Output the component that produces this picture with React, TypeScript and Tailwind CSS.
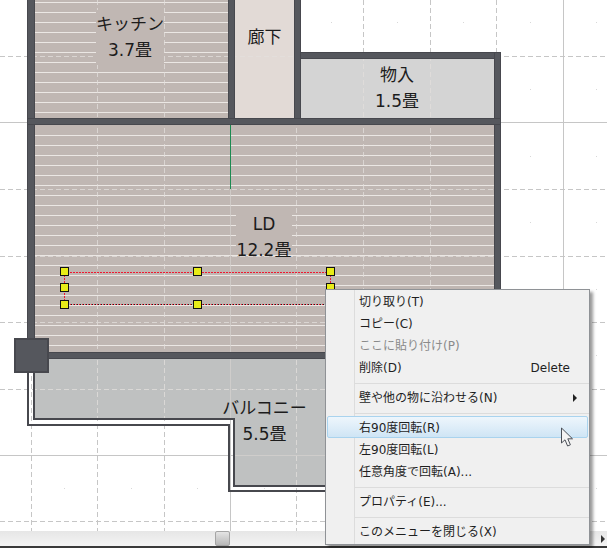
import React from "react";

const jp = "font-['DejaVu_Sans','Noto_Sans_CJK_JP',sans-serif]";

// grid positions of the drawing canvas
const solidX = [230, 563];
const solidY = [122, 455];
const dashX = [31, 97, 164, 296, 363, 430, 496];
const dashY = [56, 189, 256, 322, 389, 521];
const dotX = [64, 131, 197, 264, 331, 397, 463, 530, 596];
const dotY = [22, 89, 156, 222, 289, 355, 488];

const stripes = (from: number, to: number) => {
  const rows: number[] = [];
  for (let y = from; y <= to; y += 10) rows.push(y);
  return rows;
};

const handles = [
  [64, 271],
  [197, 271],
  [330, 271],
  [64, 287],
  [330, 287],
  [64, 304],
  [197, 304],
  [330, 304],
];

const Grid = ({ light }: { light?: boolean }) => {
  const dashed = light ? "#e3dfdd" : "#c6c6c6";
  const solid = light ? "#d5d0ce" : "#c6c6c6";
  return (
    <g shapeRendering="crispEdges">
      {dashX.map((x) => (
        <line key={x} x1={x + 0.5} x2={x + 0.5} y1={0} y2={531} stroke={dashed} strokeDasharray="5 3" />
      ))}
      {dashY.map((y) => (
        <line key={y} y1={y + 0.5} y2={y + 0.5} x1={0} x2={607} stroke={dashed} strokeDasharray="5 3" />
      ))}
      {solidX.map((x) => (
        <line key={x} x1={x + 0.5} x2={x + 0.5} y1={0} y2={531} stroke={solid} />
      ))}
      {solidY.map((y) => (
        <line key={y} y1={y + 0.5} y2={y + 0.5} x1={0} x2={607} stroke={solid} />
      ))}
    </g>
  );
};

const FloorPlan = () => (
  <svg className="absolute inset-0" width={607} height={531} viewBox="0 0 607 531">
    <Grid />
    {dotX.map((x) =>
      dotY.map((y) => <rect key={`${x}-${y}`} x={x} y={y} width={1} height={1} fill="#d8d8d8" />)
    )}

    {/* rooms */}
    <rect x={35} y={0} width={193} height={118} fill="#c0b7b3" />
    <rect x={235} y={0} width={59} height={118} fill="#e2dad6" />
    <rect x={301} y={59} width={193} height={59} fill="#d4d4d4" />
    <rect x={35} y={125} width={459} height={227} fill="#c0b7b3" />
    <path d="M35 359H494V485H235V418H35Z" fill="#bfc1c1" />

    {/* flooring boards */}
    <g shapeRendering="crispEdges" stroke="#ebe7e4">
      {stripes(2, 112).map((y) => (
        <line key={y} x1={35} x2={228} y1={y + 0.5} y2={y + 0.5} />
      ))}
      {stripes(135, 345).map((y) => (
        <line key={y} x1={35} x2={494} y1={y + 0.5} y2={y + 0.5} />
      ))}
    </g>

    {/* grid shows faintly through the rooms */}
    <clipPath id="rooms">
      <rect x={35} y={0} width={193} height={118} />
      <rect x={235} y={0} width={59} height={118} />
      <rect x={301} y={59} width={193} height={59} />
      <rect x={35} y={125} width={459} height={227} />
      <path d="M35 359H494V485H235V418H35Z" />
    </clipPath>
    <g clipPath="url(#rooms)" opacity={0.75}>
      <Grid light />
    </g>

    {/* walls */}
    <g fill="#55575d" stroke="#47484e" shapeRendering="crispEdges">
      <rect x={27.5} y={-2} width={7} height={345} />
      <rect x={228.5} y={-2} width={6} height={120} />
      <rect x={294.5} y={-2} width={6} height={120} />
      <rect x={300.5} y={52.5} width={200} height={6} />
      <rect x={494.5} y={52.5} width={6} height={290} />
      <rect x={27.5} y={118.5} width={473} height={6} />
      <rect x={35.5} y={352.5} width={320} height={6} />
    </g>

    {/* balcony double line */}
    <g fill="none" stroke="#47484e" shapeRendering="crispEdges">
      <path d="M34 355V419H234V486H340" strokeWidth={2} />
      <path d="M28 360V424.5H229V491H340" strokeWidth={2} />
    </g>

    {/* corner column */}
    <rect x={15} y={339} width={33} height={33} fill="#55575d" stroke="#47484e" strokeWidth={2} shapeRendering="crispEdges" />

    {/* guide */}
    <line x1={230.5} x2={230.5} y1={125} y2={189} stroke="#1a8a50" shapeRendering="crispEdges" />

    {/* selected item */}
    <g shapeRendering="crispEdges" fill="none">
      <path d="M64 272.5H331M64.5 272V304M330.5 272V288" stroke="#f01830" strokeDasharray="2 1" />
      <path d="M64 304.5H331" stroke="#f01830" strokeDasharray="1 2" />
      <path d="M65 304.5H331" stroke="#1d1d1d" strokeDasharray="1 2" />
    </g>
    {handles.map(([x, y]) => (
      <rect key={`${x}-${y}`} x={x - 3.5} y={y - 3.5} width={8} height={8} fill="#e8ec18" stroke="#111" shapeRendering="crispEdges" />
    ))}
  </svg>
);

const RoomLabel = ({ className, name, size }: { className: string; name: string; size?: string }) => (
  <div className={`absolute flex flex-col items-center pt-px text-[17px] leading-[26px] text-[#1c1c1c] ${className}`}>
    <span className="whitespace-nowrap">{name}</span>
    {size && <span className="whitespace-nowrap">{size}</span>}
  </div>
);

const MenuItem = ({
  label,
  shortcut,
  disabled,
  active,
  submenu,
}: {
  label: string;
  shortcut?: string;
  disabled?: boolean;
  active?: boolean;
  submenu?: boolean;
}) => (
  <div
    className={`mx-px flex h-[22px] items-center rounded-[2px] pl-[31px] pr-[10px] pt-[2px] ${
      active ? "border border-[#a9d3ee] bg-gradient-to-b from-[#eef6fc] to-[#cfe5f5]" : "border border-transparent"
    } ${disabled ? "text-[#8a8a8a]" : "text-[#1f1f1f]"}`}
  >
    <span className="flex-1 whitespace-nowrap">{label}</span>
    {shortcut && <span className="mr-[7px]">{shortcut}</span>}
    {submenu && <span className="h-0 w-0 border-y-[4px] border-l-[4px] border-y-transparent border-l-[#222]" />}
  </div>
);

const Separator = ({ className }: { className: string }) => (
  <div className={`ml-[29px] border-t border-[#dcdcdc] ${className}`} />
);

const ContextMenu = () => (
  <div
    className={`absolute left-[325px] top-[289px] h-[256px] w-[265px] border border-[#8f9296] bg-[#f0f0f0] text-[12px] shadow-[3px_3px_3px_rgba(0,0,0,0.4)] ${jp}`}
  >
    <div className="absolute bottom-0 left-[28px] top-0 border-l border-[#dcdcdc]" />
    <div className="relative flex flex-col">
      <MenuItem label="切り取り(T)" />
      <MenuItem label="コピー(C)" />
      <MenuItem label="ここに貼り付け(P)" disabled />
      <MenuItem label="削除(D)" shortcut="Delete" />
      <Separator className="mb-[2px] mt-[5px]" />
      <MenuItem label="壁や他の物に沿わせる(N)" submenu />
      <Separator className="mb-[2px] mt-[5px]" />
      <MenuItem label="右90度回転(R)" active />
      <MenuItem label="左90度回転(L)" />
      <MenuItem label="任意角度で回転(A)..." />
      <Separator className="mb-[2px] mt-[5px]" />
      <MenuItem label="プロパティ(E)..." />
      <Separator className="mb-[2px] mt-[5px]" />
      <MenuItem label="このメニューを閉じる(X)" />
    </div>
  </div>
);

const Cursor = () => (
  <svg className="absolute left-[560px] top-[427px]" width={15} height={21} viewBox="0 0 15 21">
    <path
      d="M1.5 1V16L5 12.8L7.6 19L10.4 17.8L7.8 11.8H12.5Z"
      fill="#f4f4f4"
      stroke="#4a4f57"
      strokeWidth={1}
      strokeLinejoin="round"
    />
  </svg>
);

export default function App() {
  return (
    <div className={`flex h-[548px] w-[607px] flex-col overflow-hidden bg-white ${jp}`}>
      <div className="relative h-[531px] overflow-hidden">
        <FloorPlan />
        <RoomLabel className="left-[96px] top-[10px] h-[55px] w-[68px] bg-[#c0b7b3]" name="キッチン" size="3.7畳" />
        <RoomLabel className="left-[235px] top-[23px] w-[59px]" name="廊下" />
        <RoomLabel className="left-[360px] top-[61px] w-[74px]" name="物入" size="1.5畳" />
        <RoomLabel className="left-[236px] top-[210px] h-[42px] w-[56px] bg-[#c0b7b3]" name="LD" size="12.2畳" />
        <RoomLabel className="left-[222px] top-[394px] w-[85px]" name="バルコニー" size="5.5畳" />
      </div>

      {/* horizontal scrollbar */}
      <div className="flex h-[15px] items-center bg-gradient-to-b from-[#e6e6e6] to-[#f4f4f4]">
        <div className="ml-[215px] h-[15px] w-[15px] rounded-[2px] border border-[#a5a5a5] bg-gradient-to-b from-[#e4e4e4] to-[#b8b8b8]" />
        <span className="ml-auto mr-[2px] h-0 w-0 border-y-[4px] border-l-[4px] border-y-transparent border-l-[#333]" />
      </div>
      <div className="h-[2px] bg-[#3a3a3a]" />

      <ContextMenu />
      <Cursor />
    </div>
  );
}
